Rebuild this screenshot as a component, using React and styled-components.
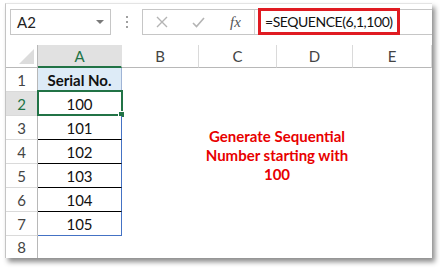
import React from "react";
import styled, { createGlobalStyle } from "styled-components";

const GlobalStyle = createGlobalStyle`
  html, body {
    margin: 0;
    padding: 0;
    background: #fff;
  }
  body {
    font-family: Lato, "Liberation Sans", sans-serif;
  }
`;

const Page = styled.div`
  width: 440px;
  height: 269px;
  padding: 3px 0 0 5px;
  box-sizing: border-box;
`;

const Window = styled.div`
  width: 427px;
  height: 255px;
  box-sizing: border-box;
  border-left: 1px solid #c4c4c4;
  border-top: 1px solid #e4e4e4;
  background: #fff;
  box-shadow: 3px 4px 5px rgba(0, 0, 0, 0.45);
  display: flex;
  flex-direction: column;
`;

const FormulaBar = styled.div`
  height: 41px;
  box-sizing: border-box;
  padding: 5px 0 0 4px;
  display: flex;
  align-items: flex-start;
`;

const NameBox = styled.div`
  width: 101px;
  height: 26px;
  box-sizing: border-box;
  border: 1px solid #c6c6c6;
  display: flex;
  align-items: center;
  justify-content: space-between;
  padding: 0 6px 0 6px;
  font-size: 15px;
  color: #222;
`;

const Caret = styled.span`
  width: 0;
  height: 0;
  border-left: 4px solid transparent;
  border-right: 4px solid transparent;
  border-top: 4px solid #7a7a7a;
`;

const Grip = styled.div`
  width: 31px;
  height: 26px;
  display: flex;
  flex-direction: column;
  align-items: center;
  justify-content: center;
  gap: 3px;

  span {
    width: 2px;
    height: 2px;
    background: #a0a0a0;
  }
`;

const FormulaBox = styled.div`
  flex: 1;
  height: 26px;
  box-sizing: border-box;
  border: 1px solid #c6c6c6;
  border-right: none;
  display: flex;
  align-items: flex-start;
`;

const IconSlot = styled.div`
  width: 37px;
  height: 24px;
  display: flex;
  align-items: center;
  justify-content: center;
  color: #b4b4b4;
`;

const Fx = styled.span`
  font-family: "Liberation Serif", serif;
  font-style: italic;
  font-size: 15px;
  color: #555;
`;

const Divider = styled.div`
  width: 1px;
  height: 24px;
  background: #d4d4d4;
`;

const Highlight = styled.div`
  margin: -2px 0 0 3px;
  height: 27px;
  box-sizing: border-box;
  border: 3px solid #e01b22;
  padding: 0 4px 0 4px;
  display: flex;
  align-items: center;
  font-size: 14px;
  letter-spacing: -0.45px;
  color: #111;
  white-space: nowrap;
`;

const Sheet = styled.div`
  flex: 1;
  display: grid;
  grid-template-columns: 32px 84px 77px 78px 76px 1fr;
  grid-template-rows: 23px repeat(7, 24px) 1fr;
  font-size: 15px;
`;

const Corner = styled.div`
  position: relative;
  border-right: 1px solid #b8b8b8;
  border-bottom: 1px solid #b8b8b8;
  box-sizing: border-box;

  &::after {
    content: "";
    position: absolute;
    right: 3px;
    bottom: 3px;
    width: 0;
    height: 0;
    border-left: 15px solid transparent;
    border-bottom: 15px solid #dcdcdc;
  }
`;

const ColHead = styled.div`
  box-sizing: border-box;
  display: flex;
  align-items: center;
  justify-content: center;
  background: ${(p) => (p.$active ? "#e1e1e1" : "#fff")};
  color: ${(p) => (p.$active ? "#217346" : "#444")};
  border-right: 1px solid ${(p) => (p.$active ? "#e1e1e1" : "#dadada")};
  border-bottom: ${(p) => (p.$active ? "2px solid #217346" : "1px solid #b8b8b8")};
`;

const RowHead = styled.div`
  grid-column: 1;
  box-sizing: border-box;
  display: flex;
  align-items: center;
  justify-content: center;
  background: ${(p) => (p.$active ? "#e1e1e1" : "#fff")};
  color: ${(p) => (p.$active ? "#217346" : "#444")};
  border-right: 1px solid #b8b8b8;
  border-bottom: ${(p) => (p.$last ? "none" : "1px solid #dadada")};
`;

const Cell = styled.div`
  grid-column: 2;
  position: relative;
  box-sizing: border-box;
  display: flex;
  align-items: center;
  justify-content: center;
  color: #111;
  font-weight: ${(p) => (p.$head ? 700 : 400)};
  background: ${(p) => (p.$head ? "#ddebf7" : "#fff")};
  border-right: ${(p) => (p.$edge ? `1px solid ${p.$edge}` : "none")};
  border-bottom: ${(p) => (p.$under ? `1px solid ${p.$under}` : "none")};
`;

const Selection = styled.div`
  position: absolute;
  top: -2px;
  left: -1px;
  right: -2px;
  bottom: -1px;
  border: 2px solid #217346;
  pointer-events: none;

  &::after {
    content: "";
    position: absolute;
    right: -4px;
    bottom: -4px;
    width: 5px;
    height: 5px;
    background: #217346;
    border: 1px solid #fff;
  }
`;

const Note = styled.div`
  grid-column: 3 / 7;
  grid-row: 4 / 7;
  display: flex;
  align-items: center;
  justify-content: center;
  padding-top: 6px;
  text-align: center;
  color: #e80000;
  font-weight: 700;
  font-size: 15px;
  line-height: 19px;
`;

const columns = ["A", "B", "C", "D", "E"];

const rows = [
  { n: 1, value: "Serial No.", head: true, edge: "#9fb4d6", under: "#000" },
  { n: 2, value: "100", active: true, edge: "#4472c4", under: "#000" },
  { n: 3, value: "101", edge: "#4472c4", under: "#000" },
  { n: 4, value: "102", edge: "#4472c4", under: "#000" },
  { n: 5, value: "103", edge: "#4472c4", under: "#000" },
  { n: 6, value: "104", edge: "#4472c4", under: "#000" },
  { n: 7, value: "105", edge: "#4472c4", under: "#4472c4" },
  { n: 8, value: "" },
];

const Cross = () => (
  <svg width="12" height="12" viewBox="0 0 12 12">
    <path d="M1 1 L11 11 M11 1 L1 11" stroke="currentColor" strokeWidth="1.4" fill="none" />
  </svg>
);

const Check = () => (
  <svg width="13" height="11" viewBox="0 0 13 11">
    <path d="M1 6 L4.5 9.5 L12 1" stroke="currentColor" strokeWidth="1.6" fill="none" />
  </svg>
);

export default function App() {
  return (
    <Page>
      <GlobalStyle />
      <Window>
        <FormulaBar>
          <NameBox>
            A2
            <Caret />
          </NameBox>
          <Grip>
            <span />
            <span />
            <span />
          </Grip>
          <FormulaBox>
            <IconSlot>
              <Cross />
            </IconSlot>
            <IconSlot>
              <Check />
            </IconSlot>
            <IconSlot>
              <Fx>fx</Fx>
            </IconSlot>
            <Divider />
            <Highlight>=SEQUENCE(6,1,100)</Highlight>
          </FormulaBox>
        </FormulaBar>

        <Sheet>
          <Note>
            Generate Sequential
            <br />
            Number starting with
            <br />
            100
          </Note>
          <Corner />
          {columns.map((c) => (
            <ColHead key={c} $active={c === "A"}>
              {c}
            </ColHead>
          ))}
          {rows.map((r) => (
            <React.Fragment key={r.n}>
              <RowHead $active={r.active} $last={r.n === 8}>
                {r.n}
              </RowHead>
              <Cell $head={r.head} $edge={r.edge} $under={r.under}>
                {r.value}
                {r.active && <Selection />}
              </Cell>
            </React.Fragment>
          ))}
        </Sheet>
      </Window>
    </Page>
  );
}
